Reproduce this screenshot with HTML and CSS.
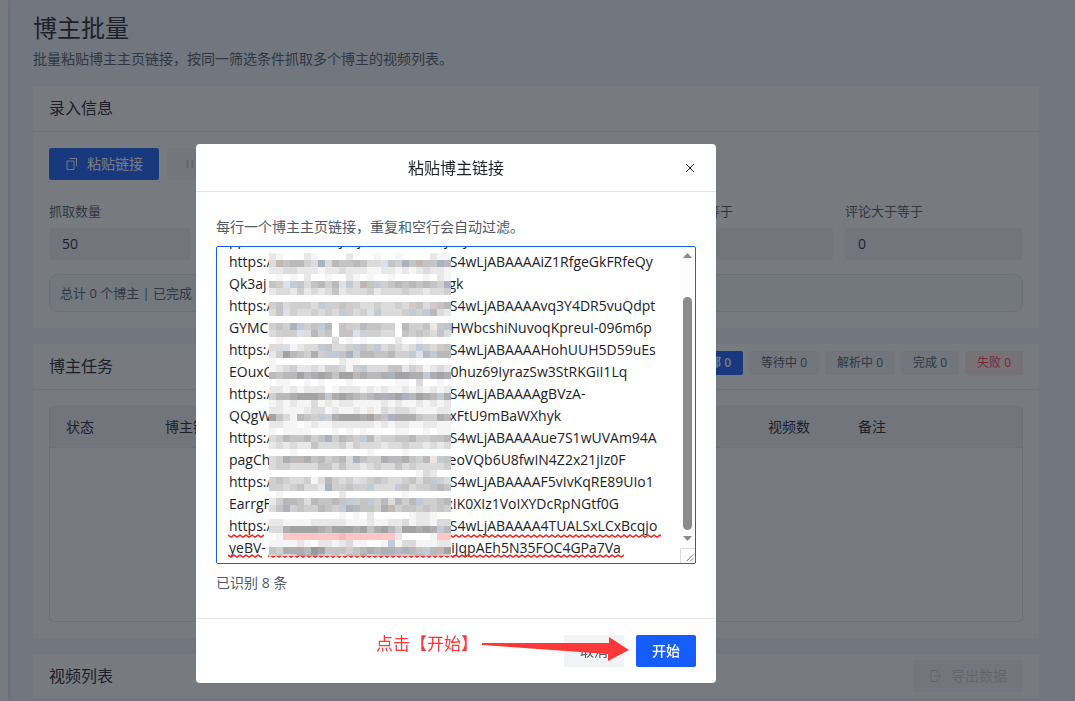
FILE: index.html
```html
<!DOCTYPE html>
<html lang="zh-CN">
<head>
    <meta charset="UTF-8">
    <meta name="viewport" content="width=device-width, initial-scale=1.0">
    <title>博主批量</title>
    <link rel="stylesheet" href="styles.css">
</head>
<body>
    <div class="layout">
        <aside class="sidebar"></aside>
        <main class="content">
            <header class="page-header">
                <h1>博主批量</h1>
                <p>批量粘贴博主主页链接，按同一筛选条件抓取多个博主的视频列表。</p>
            </header>

            <section class="card">
                <div class="card-header">
                    <h2>录入信息</h2>
                </div>
                <div class="card-body">
                    <div class="toolbar">
                        <button class="btn btn-primary" type="button">
                            <svg class="icon" viewBox="0 0 14 14"><path d="M4.5 1.5h7v8M2 4h7v8.5H2z"/></svg>
                            粘贴链接
                        </button>
                        <button class="btn btn-pause" type="button" disabled aria-label="暂停">
                            <svg class="icon" viewBox="0 0 14 14"><path class="bars" d="M4.5 3v8M9.5 3v8"/></svg>
                        </button>
                    </div>
                    <div class="filters">
                        <div class="field">
                            <label for="count">抓取数量</label>
                            <input id="count" type="text" value="50">
                        </div>
                        <div class="field field-likes">
                            <label for="likes">点赞大于等于</label>
                            <input id="likes" type="text">
                        </div>
                        <div class="field">
                            <label for="comments">评论大于等于</label>
                            <input id="comments" type="text" value="0">
                        </div>
                    </div>
                    <div class="summary">总计 0 个博主 | 已完成 0</div>
                </div>
            </section>

            <section class="card">
                <div class="card-header">
                    <h2>博主任务</h2>
                    <div class="tags">
                        <button class="tag active" type="button">全部 0</button>
                        <button class="tag" type="button">等待中 0</button>
                        <button class="tag" type="button">解析中 0</button>
                        <button class="tag" type="button">完成 0</button>
                        <button class="tag failed" type="button">失败 0</button>
                    </div>
                </div>
                <div class="card-body">
                    <div class="table-wrap">
                        <table>
                            <thead>
                                <tr>
                                    <th class="col-status">状态</th>
                                    <th>博主链接</th>
                                    <th class="col-videos">视频数</th>
                                    <th class="col-note">备注</th>
                                </tr>
                            </thead>
                        </table>
                    </div>
                </div>
            </section>

            <section class="card">
                <div class="card-header">
                    <h2>视频列表</h2>
                    <button class="btn btn-export" type="button" disabled>
                        <svg class="icon" viewBox="0 0 14 14"><path d="M8 4V1.5H2v11h6V10M5 7h7M9.5 4.5L12 7 9.5 9.5"/></svg>
                        导出数据
                    </button>
                </div>
            </section>
        </main>
    </div>

    <div class="mask">
        <div class="modal" role="dialog" aria-labelledby="modal-title">
            <div class="modal-header">
                <h3 id="modal-title">粘贴博主链接</h3>
                <button class="close" type="button" aria-label="关闭">
                    <svg viewBox="0 0 12 12"><path d="M2 2l8 8M10 2l-8 8"/></svg>
                </button>
            </div>
            <div class="modal-body">
                <label for="links">每行一个博主主页链接，重复和空行会自动过滤。</label>
                <div class="links-box">
                    <textarea id="links" spellcheck="false">

pp                    _    j    j                       j    y
https:/                                                 S4wLjABAAAAiZ1RfgeGkFRfeQy
Qk3aj                                                  gk
https:/                                                 S4wLjABAAAAvq3Y4DR5vuQdpt
GYMC                                                  HWbcshiNuvoqKpreuI-096m6p
https:/                                                 S4wLjABAAAAHohUUH5D59uEs
EOuxC                                                 0huz69IyrazSw3StRKGiI1Lq
https:/                                                 S4wLjABAAAAgBVzA-
QQgW                                                 xFtU9mBaWXhyk
https:/                                                 S4wLjABAAAAue7S1wUVAm94A
pagCh                                                 eoVQb6U8fwIN4Z2x21jIz0F
https:/                                                 S4wLjABAAAAF5vIvKqRE89UIo1
EarrgF                                                xIK0XIz1VoIXYDcRpNGtf0G
https:/                                                 S4wLjABAAAA4TUALSxLCxBcqjo
yeBV-                                                   iJqpAEh5N35FOC4GPa7Va</textarea>
                    <svg class="squiggles">
                        <defs>
                            <pattern id="wave" width="6" height="4" patternUnits="userSpaceOnUse">
                                <path d="M-1 0L0 1L3 3L6 1L7 0"/>
                            </pattern>
                        </defs>
                        <rect x="12" y="288" width="36" height="4"/>
                        <rect x="233" y="288" width="212" height="4"/>
                        <rect x="12" y="308" width="34" height="4"/>
                        <rect x="52" y="308" width="356" height="4"/>
                    </svg>
                    <canvas class="mosaic" id="mosaic" width="182" height="303"></canvas>
                    <div class="scrollbar">
                        <svg class="arrow" viewBox="0 0 15 16"><path d="M3 11L7.5 6L12 11z"/></svg>
                        <span class="thumb"></span>
                        <svg class="arrow" viewBox="0 0 15 16"><path d="M3 6L7.5 11L12 6z"/></svg>
                        <svg class="grip" viewBox="0 0 15 15"><path d="M6 13L13 6M10 13L13 10"/></svg>
                    </div>
                </div>
                <p class="recognized">已识别 8 条</p>
            </div>
            <div class="modal-footer">
                <button class="btn btn-cancel" type="button">取消</button>
                <button class="btn btn-start" type="button">开始</button>
                <span class="hint">点击【开始】</span>
                <svg class="hint-arrow" viewBox="0 0 148 26"><path d="M1 7L128 7L128 1L148 14L127 25L127 18L1 9z"/></svg>
            </div>
        </div>
    </div>

    <script>
        // 链接打码：0-9 灰阶，a-c 偏蓝，w-y 偏暖，p/q 粉色
        const palette = {
            0: '#ffffff', 1: '#f5f5f6', 2: '#e8e8e9', 3: '#dbdbdc', 4: '#cfcfd0',
            5: '#c4c4c5', 6: '#b9b9bb', 7: '#aeaeb1', 8: '#a3a3a6', 9: '#98989b',
            a: '#dae1ea', b: '#c2cad5', c: '#abb1be', w: '#f0e6df', x: '#d2cac6', y: '#c0b8b5',
            p: '#ffc5c7', q: '#f7b8b8'
        };
        const rows = [
            '21000210000200010010000211', '3y56643c36556533a54c5y55c6', '22332221223222112212123221',
            '01010200100210100100001021', '5xab535646ab3y5b456565654c', '23324232352333423334332334',
            '00000000000000000000000000', '4534443b445x43343343x53x56', '35a4334343bx34ab3334b4b632',
            '00000000000000000000000000', '454cb45b605x46554406445wb5', '34x4a3645055a4443305454353',
            '01000000030101000020010000', '33a1233b5334b54b34323b43x5', '24865474bb5c46655644ba6b66',
            '10000000002110000000100000', '1234223244314b333552431232', '65668678758867667c8877b787',
            '01100101000100000011030010', '22121222012221212112121212', '46678887b7876567c78c6876b7',
            '12121131212211112121121212', '22111233121121w13233211122', '8531654b4788878y5c7775447y',
            '22110121122222212122112211', '10111100010101000011001011', '34655645c4654b634455644556',
            '23232253334243332334332323', '00010000000000100001000000', '3476y7564563c5447667546wb5',
            '34433335535332343353433334', '00000000000000000000013200', '454334136434a3454334535b43',
            '44345332c44544b333b5344565', '01000000002000000001000000', '24665365565b45b463646b4456',
            '35c4544654bc65547y45545454', '00000000001010200000122100', '22111122222111211223122133',
            '337888876888785786488787b6', '01ppppppppqppppppp200001pp', '11112102212311001b13311122',
            '54777698555456767c6c65b6y8', '45348785453657456654565654'
        ];
        const ctx = document.getElementById('mosaic').getContext('2d');
        rows.forEach((row, y) => {
            row.split('').forEach((cell, x) => {
                ctx.fillStyle = palette[cell];
                ctx.fillRect(x * 7, y * 7, 7, 7);
            });
        });

        const links = document.getElementById('links');
        links.scrollTop = links.scrollHeight;
    </script>
</body>
</html>
```
FILE: styles.css
```css
* {
    box-sizing: border-box;
}
body {
    margin: 0;
    height: 100vh;
    overflow: hidden;
    font-family: 'Open Sans', 'Noto Sans CJK SC', sans-serif;
    font-size: 14px;
    line-height: 22px;
    color: #1d2129;
}
h1, h2, h3, p {
    margin: 0;
    font-weight: 400;
}
button, input, textarea {
    font: inherit;
    color: inherit;
}
.layout {
    display: flex;
    height: 100vh;
    background: #f3f5fd;
}
.sidebar {
    flex: none;
    width: 8px;
    background: #fff;
    box-shadow: 1px 0 4px rgba(0, 0, 0, 0.12);
}
.content {
    flex: 1;
    min-width: 0;
    padding: 12px 36px 0 25px;
    overflow: hidden;
}
.page-header {
    margin-bottom: 16px;
}
.page-header h1 {
    font-size: 24px;
    line-height: 32px;
    margin-bottom: 4px;
}
.page-header p {
    color: #4e5969;
}
.card {
    background: #fff;
    margin-bottom: 16px;
}
.card-header {
    display: flex;
    align-items: center;
    justify-content: space-between;
    height: 46px;
    padding: 0 16px 2px;
    border-bottom: 1px solid #e5e6eb;
}
.card-header h2 {
    font-size: 16px;
}
.card-body {
    padding: 16px;
}
.toolbar {
    display: flex;
    gap: 8px;
    margin-bottom: 24px;
}
.btn {
    display: flex;
    align-items: center;
    justify-content: center;
    gap: 8px;
    height: 32px;
    padding: 0 16px;
    border: none;
    border-radius: 2px;
    background: #f2f3f5;
    cursor: pointer;
}
.btn-primary {
    background: #165dff;
    color: #fff;
}
.btn-pause, .btn-export {
    background: #f5f6fa;
    color: #c9cdd4;
}
.btn-pause {
    width: 82px;
    justify-content: flex-start;
}
.icon {
    width: 14px;
    height: 14px;
    fill: none;
    stroke: currentColor;
    stroke-width: 1;
}
.icon .bars {
    stroke-width: 2;
}
.filters {
    display: grid;
    grid-template-columns: 142fr 440fr 178fr 178fr;
    gap: 12px;
    margin-bottom: 14px;
}
.field label {
    display: block;
    margin-bottom: 10px;
    font-size: 13px;
    line-height: 14px;
    color: #4e5969;
}
.field input {
    display: block;
    width: 100%;
    height: 32px;
    padding: 0 13px 2px;
    border: none;
    border-radius: 2px;
    background: #f2f3f8;
}
.field-likes {
    grid-column: 3;
}
.summary {
    padding: 7px 10px;
    border: 1px solid #e5e6eb;
    border-radius: 8px;
    background: #f5f7fc;
    font-size: 13px;
    color: #4e5969;
}
.tags {
    display: flex;
    gap: 6px;
    margin-bottom: 6px;
}
.tag {
    height: 24px;
    padding: 0 12px;
    border: none;
    border-radius: 2px;
    background: #f2f3f5;
    font-size: 12px;
    line-height: 24px;
    color: #4e5969;
    cursor: pointer;
}
.tag.active {
    background: #165dff;
    font-weight: 600;
    color: #fff;
}
.tag.failed {
    background: #ffece8;
    color: #f53f3f;
}
.table-wrap {
    height: 216px;
    border: 1px solid #e5e6eb;
    border-radius: 4px;
    overflow: hidden;
}
table {
    width: 100%;
    table-layout: fixed;
    border-collapse: collapse;
}
th {
    height: 40px;
    padding: 0 16px;
    border-bottom: 1px solid #e5e6eb;
    background: #f2f3f8;
    font-weight: 400;
    text-align: left;
}
.col-status {
    width: 99px;
}
.col-videos {
    width: 90px;
}
.col-note {
    width: 180px;
}
.mask {
    position: fixed;
    inset: 0;
    display: flex;
    align-items: flex-start;
    padding: 144px 0 0 196px;
    background: rgba(29, 33, 41, 0.6);
}
.modal {
    width: 520px;
    border-radius: 4px;
    background: #fff;
}
.modal-header {
    position: relative;
    height: 48px;
    border-bottom: 1px solid #e5e6eb;
    text-align: center;
}
.modal-header h3 {
    font-size: 16px;
    line-height: 48px;
}
.close {
    position: absolute;
    top: 18px;
    right: 20px;
    width: 12px;
    height: 12px;
    padding: 0;
    border: none;
    background: none;
    cursor: pointer;
}
.close svg {
    display: block;
    fill: none;
    stroke: #1d2129;
    stroke-width: 1;
}
.modal-body {
    padding: 24px 20px;
    color: #4e5969;
}
.modal-body label {
    display: block;
    margin-bottom: 8px;
}
.links-box {
    position: relative;
    margin-bottom: 8px;
}
.links-box textarea {
    display: block;
    width: 100%;
    height: 318px;
    padding: 4px 12px;
    border: 1px solid #165dff;
    border-radius: 2px;
    outline: none;
    resize: none;
    white-space: pre;
    overflow: auto;
    scrollbar-width: none;
    color: #1d2129;
}
.squiggles {
    position: absolute;
    inset: 0;
    width: 100%;
    height: 100%;
    pointer-events: none;
}
.squiggles path {
    fill: none;
    stroke: #f52020;
    stroke-width: 1.5;
}
.squiggles rect {
    fill: url(#wave);
}
.mosaic {
    position: absolute;
    top: 7px;
    left: 53px;
}
.scrollbar {
    position: absolute;
    top: 1px;
    right: 1px;
    bottom: 1px;
    width: 15px;
    display: flex;
    flex-direction: column;
    align-items: center;
    background: #fcfcfc;
}
.arrow {
    width: 15px;
    height: 16px;
    fill: #8b8b8b;
}
.thumb {
    width: 9px;
    height: 233px;
    margin: 34px 0 0;
    border-radius: 5px;
    background: #8b8b8b;
}
.grip {
    width: 15px;
    height: 15px;
    margin-top: auto;
    border: 1px solid #dcdcdc;
    border-width: 1px 0 0 1px;
    fill: none;
    stroke: #666;
}
.modal-footer {
    position: relative;
    display: flex;
    justify-content: flex-end;
    gap: 12px;
    padding: 16px 20px;
    border-top: 1px solid #e5e6eb;
}
.btn-cancel {
    color: #4e5969;
}
.btn-start {
    background: #165dff;
    color: #fff;
    font-weight: 500;
}
.hint {
    position: absolute;
    top: 14px;
    left: 180px;
    font-size: 17px;
    color: #fe3838;
}
.hint-arrow {
    position: absolute;
    top: 17px;
    left: 285px;
    width: 148px;
    height: 26px;
    fill: #fe3838;
}
```
